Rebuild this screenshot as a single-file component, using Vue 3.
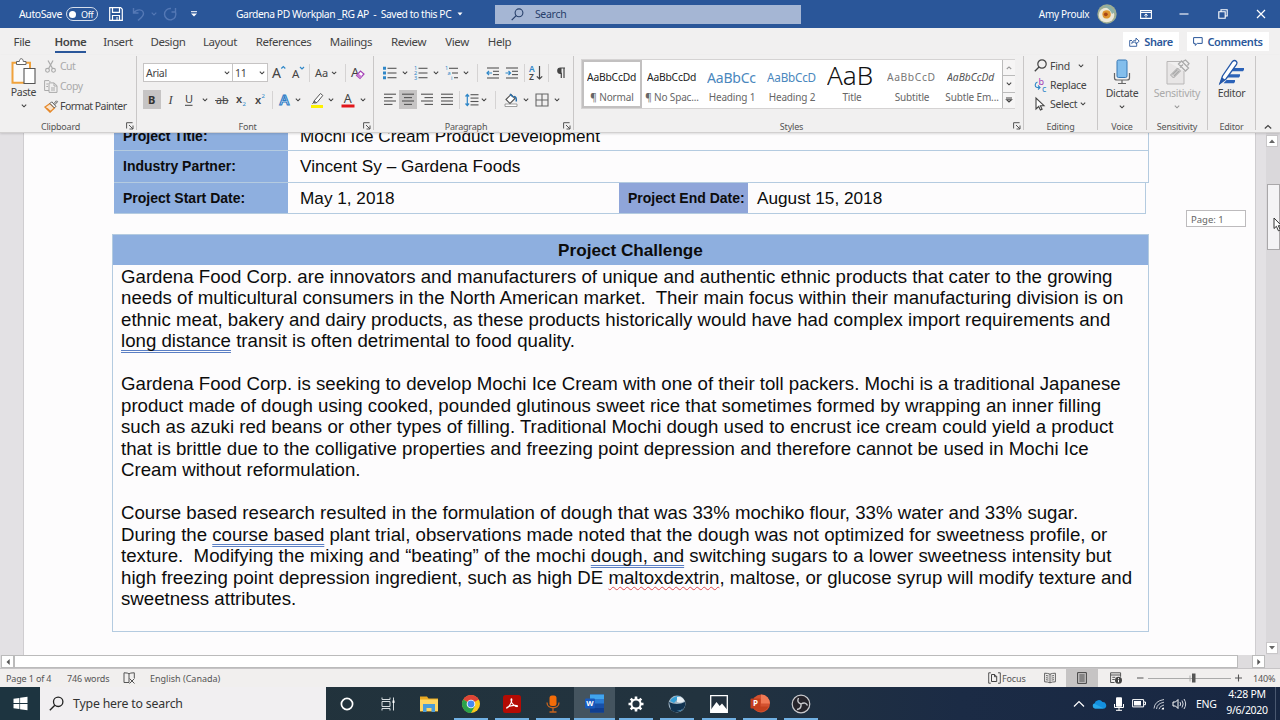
<template>
  <div class="screen">
    <header class="titlebar">
      <span class="autosave">AutoSave</span>
      <span class="toggle"><i></i>Off</span>
      <div class="quick">
        <span v-for="q in quick" :key="q.icon" class="cell" :style="{ width: q.w + 'px' }"><Icon :name="q.icon" /></span>
      </div>
      <div class="doc-title">Gardena PD Workplan _RG AP&nbsp; -&nbsp; Saved to this PC <Icon name="caret" /></div>
      <div class="search"><Icon name="lens" /><span>Search</span></div>
      <div class="user">Amy Proulx</div>
      <Icon name="avatar" />
      <div class="window-buttons">
        <span v-for="b in ['ribbonOpts', 'minimize', 'restore', 'close']" :key="b"><Icon :name="b" /></span>
      </div>
    </header>

    <nav class="tabs">
      <span v-for="t in tabs" :key="t.name" class="tab" :class="{ active: t.name === 'Home' }" :style="{ width: t.w + 'px' }"><b>{{ t.name }}</b></span>
      <div class="tab-actions">
        <span class="action share"><Icon name="share" />Share</span>
        <span class="action comments"><Icon name="comment" />Comments</span>
      </div>
    </nav>

    <section class="ribbon">
      <div class="group clipboard">
        <div class="group-body">
          <div class="big paste"><Icon name="paste" /><span>Paste</span><Icon name="chev" /></div>
          <div class="stack">
            <span class="off"><Icon name="cut" />Cut</span>
            <span class="off"><Icon name="copy" />Copy</span>
            <span><Icon name="painter" />Format Painter</span>
          </div>
        </div>
        <div class="group-label">Clipboard</div>
        <Icon name="launcher" class="launcher" />
      </div>

      <div class="group font">
        <div class="row">
          <span class="combo family">Arial<Icon name="chev" /></span>
          <span class="combo size">11<Icon name="chev" /></span>
          <span v-for="(c, i) in fontTop" :key="i" class="cell" :class="c.cls" :style="{ width: c.w + 'px' }"><Icon v-if="c.icon" :name="c.icon" /></span>
        </div>
        <div class="row second">
          <span v-for="(c, i) in fontBottom" :key="i" class="cell" :class="c.cls" :style="{ width: c.w + 'px' }"><Icon v-if="c.icon" :name="c.icon" /></span>
        </div>
        <div class="group-label">Font</div>
        <Icon name="launcher" class="launcher" />
      </div>

      <div class="group paragraph">
        <div class="row">
          <span v-for="(c, i) in paraTop" :key="i" class="cell" :class="c.cls" :style="{ width: c.w + 'px' }"><Icon v-if="c.icon" :name="c.icon" /></span>
        </div>
        <div class="row second">
          <span v-for="(c, i) in paraBottom" :key="i" class="cell" :class="c.cls" :style="{ width: c.w + 'px' }"><Icon v-if="c.icon" :name="c.icon" /></span>
        </div>
        <div class="group-label">Paragraph</div>
        <Icon name="launcher" class="launcher" />
      </div>

      <div class="group styles">
        <div class="gallery">
          <div v-for="s in styles" :key="s.name" class="style" :class="s.cls">
            <div class="sample"><span>{{ s.sample }}</span></div>
            <div class="style-name">{{ s.name }}</div>
          </div>
          <div class="gallery-scroll">
            <span class="faded"><Icon name="chevUp" /></span>
            <span><Icon name="chev" /></span>
            <span><Icon name="more" /></span>
          </div>
        </div>
        <div class="group-label">Styles</div>
        <Icon name="launcher" class="launcher" />
      </div>

      <div class="group editing">
        <div class="stack">
          <span><Icon name="find" /><em class="find">Find</em><Icon name="chev" /></span>
          <span><Icon name="replace" />Replace</span>
          <span><Icon name="select" /><em>Select</em><Icon name="chev" /></span>
        </div>
        <div class="group-label">Editing</div>
      </div>
      <div class="group voice">
        <div class="big"><Icon name="dictate" /><span>Dictate</span><Icon name="chev" /></div>
        <div class="group-label">Voice</div>
      </div>
      <div class="group sens">
        <div class="big off"><Icon name="sensitivity" /><span>Sensitivity</span><Icon name="chev" /></div>
        <div class="group-label">Sensitivity</div>
      </div>
      <div class="group editor">
        <div class="big"><Icon name="editor" /><span>Editor</span></div>
        <div class="group-label">Editor</div>
      </div>
      <div class="collapse"><Icon name="collapse" /></div>
    </section>

    <main class="workspace">
      <div class="canvas">
        <div class="paper">
          <div class="info">
            <div class="info-row first"><b>Project Title:</b><span>Mochi Ice Cream Product Development</span></div>
            <div class="info-row"><b>Industry Partner:</b><span>Vincent Sy – Gardena Foods</span></div>
            <div class="info-row dates">
              <b>Project Start Date:</b><span>May 1, 2018</span>
              <b class="end">Project End Date:</b><span class="end-value">August 15, 2018</span>
            </div>
          </div>
          <div class="challenge">
            <h2>Project Challenge</h2>
            <div class="body">
              <p v-for="(line, i) in lines" :key="i"><span v-for="(s, j) in line" :key="j" :class="s.cls">{{ s.t }}</span></p>
            </div>
          </div>
        </div>
        <div class="page-tip">Page: 1</div>
      </div>
      <div class="vscroll">
        <span class="arrow"><Icon name="triUp" /></span>
        <span class="thumb"></span>
        <span class="arrow bottom"><Icon name="triDown" /></span>
        <Icon name="pointer" class="pointer" />
      </div>
    </main>

    <div class="hscroll">
      <span class="harrow"><Icon name="triLeft" /></span>
      <span class="hthumb"></span>
      <span class="harrow right"><Icon name="triRight" /></span>
    </div>

    <footer class="status">
      <span class="pages">Page 1 of 4</span>
      <span class="words">746 words</span>
      <Icon name="proof" />
      <span class="lang">English (Canada)</span>
      <div class="views">
        <Icon name="focus" /><span class="focus">Focus</span>
        <span class="view"><Icon name="readMode" /></span>
        <span class="view on"><Icon name="printLayout" /></span>
        <span class="view web"><Icon name="webLayout" /></span>
        <Icon name="zoomBar" />
        <span class="zoom">140%</span>
      </div>
    </footer>

    <div class="taskbar">
      <span class="start"><Icon name="windows" /></span>
      <span class="task-search"><Icon name="lensDark" />Type here to search</span>
      <span v-for="a in apps" :key="a.icon" class="app" :class="{ running: a.run, current: a.icon === 'word' }"><Icon :name="a.icon" /></span>
      <div class="tray">
        <span v-for="t in tray" :key="t.icon" class="cell" :style="{ width: t.w + 'px' }"><Icon :name="t.icon" /></span>
        <span class="eng">ENG</span>
        <div class="clock"><span>4:28 PM</span><span>9/6/2020</span></div>
      </div>
    </div>
  </div>
</template>

<script setup>
import { h } from 'vue'

const font = 'font-family="Noto Sans, sans-serif"'
const bar = (x, y, w, c = '#555') => `<path d="M${x} ${y}h${w}" stroke="${c}" stroke-width="1.1"/>`

// name: [width, height, markup]
const glyphs = {
  save: [14, 14, '<path d="M.7.7h11l1.6 1.6v11H.7zM3.5.7v4.6h7V.7M3.5 13V8.5h7V13" fill="none" stroke="#fff" stroke-width="1.2"/><path d="M8 10v3" stroke="#fff"/>'],
  undo: [14, 14, '<path d="M1.500 1v5h5M1.800 5.800C5 1.500 11 2 11.500 6.500 11.700 9 9 11 6 13.500" fill="none" stroke="#5478b5" stroke-width="1.400"/>'],
  chevBlue: [6, 4, '<path d="M.7.7 3 3 5.300.7" fill="none" stroke="#5478b5" stroke-width="1.100"/>'],
  redo: [14, 14, '<path d="M11.500 1v4h-4M11.500 5A5.700 5.700 0 1 1 7 1.500" fill="none" stroke="#5478b5" stroke-width="1.400"/>'],
  customize: [8, 6, '<path d="M1 .7h6" stroke="#fff"/><path d="M1 2.500h6L4 5.500z" fill="#fff"/>'],
  caret: [6, 4, '<path d="M.5.5h5L3 3.500z" fill="#fff"/>'],
  lens: [13, 13, '<circle cx="8" cy="4.800" r="3.900" fill="none" stroke="#28406b" stroke-width="1.100"/><path d="m5.200 7.700-4.500 4.500" stroke="#28406b" stroke-width="1.200"/>'],
  avatar: [20, 20, '<circle cx="10" cy="10" r="9.700" fill="#9fae93"/><ellipse cx="9.500" cy="11" rx="7.800" ry="7.300" fill="#ece8d8"/><path d="M7 2q6-2 11 6l-3 2q-2-5-8-8z" fill="#8db1a8"/><path d="M6 7.500q4-2.500 7 0 2 4-1 6.500-4 1.500-6-1-1.500-3 0-5.500z" fill="#dd9430"/><circle cx="8.800" cy="10.300" r="1.900" fill="#a94516"/>'],
  ribbonOpts: [12, 9, '<path d="M.6.6h10.800v7.800H.6zM.6 2.500h10.800" fill="none" stroke="#fff" stroke-width="1.100"/><path d="M6 7.500V4M4.300 5.500 6 3.900l1.700 1.600" fill="none" stroke="#fff"/>'],
  minimize: [10, 2, '<path d="M.5 1h9" stroke="#fff" stroke-width="1.100"/>'],
  restore: [10, 10, '<path d="M.8 2.800h6.400v6.400H.8zM3 2.500V.8h6.200V7H7.500" fill="none" stroke="#fff" stroke-width="1.100"/>'],
  close: [10, 10, '<path d="m1 1 8 8M9 1 1 9" stroke="#fff" stroke-width="1.200"/>'],
  share: [11, 10, '<path d="M3 3.500H.7v5.800h7V6.500M2.700 6.500C3 4.500 4.500 3.300 7 3.200V1l3.200 3.200L7 7V5C5 5 3.600 5.400 2.700 6.500z" fill="none" stroke="#2b579a" stroke-width=".9"/>'],
  comment: [10, 9, '<path d="M.6.6h8.600v5.800H4.300L2.200 8.400v-2H.6z" fill="none" stroke="#2b579a"/>'],
  chev: [6, 4, '<path d="m.8.700 2.200 2.100L5.200.7" fill="none" stroke="#444" stroke-width="1.100"/>'],
  chevUp: [6, 4, '<path d="M.8 3 3 .9 5.200 3" fill="none" stroke="#999" stroke-width="1.100"/>'],
  more: [8, 6, '<path d="M1 1h6M1.500 2.700 4 5l2.500-2.300z" fill="none" stroke="#444" stroke-width="1.100"/>'],
  collapse: [8, 6, '<path d="m.8 4.500 3.200-3 3.200 3" fill="none" stroke="#444" stroke-width="1.200"/>'],
  launcher: [8, 8, '<path d="M.6 6.500V.7h6M3 3l4 4M7 3.500V7H3.500" fill="none" stroke="#555"/>'],
  paste: [26, 28, '<path d="M1.500 4.800h17.500v20H1.500z" fill="#fafafa" stroke="#f0a23c" stroke-width="2"/><path d="M5.500 6.500v-3h2.800C8.500 1.500 9.300.7 10.300.7s1.900.8 2 2.800H15v3z" fill="#fff" stroke="#666"/><path d="M13 10.500h11v15H13z" fill="#fff" stroke="#555" stroke-width="1.100"/>'],
  cut: [13, 13, '<path d="m3.500.5 4.700 8.300M8.500.5 4 8.800" stroke="#aaa" stroke-width="1.200"/><g fill="none" stroke="#aaa" stroke-width="1.100"><circle cx="3" cy="10.300" r="1.900"/><circle cx="9" cy="10.300" r="1.900"/></g>'],
  copy: [14, 13, '<path d="M5 10.500H.6V.6H5l1.500 1.500M5 2.900h5l3 2.800v6.700H5zM10 3v3h3M7 8h4M7 10h4M2.300 4H4M2.300 6.500H4" fill="none" stroke="#aaa"/>'],
  painter: [14, 13, '<path d="m1 7 5-3.500 4.500 4.500L6 12z" fill="#fbe3c9" stroke="#e68a2d" stroke-width="1.300"/><path d="M3 8.500 7 12" stroke="#e68a2d" stroke-width="1.500"/><path d="m6 3.500 1.700-1.700 4.200 4.500-1.500 1.600zM9.700 3.800 12.500.8l1 1-2.800 3" fill="#fff" stroke="#555"/>'],
  grow: [16, 17, `<text x="1" y="14" font-size="14" fill="#444" ${font}>A</text><path d="m10.300 4.500 2-2 2 2" fill="none" stroke="#2f87c8" stroke-width="1.200"/>`],
  shrink: [16, 17, `<text x="1" y="14" font-size="11.500" fill="#444" ${font}>A</text><path d="m9 3 2 2 2-2" fill="none" stroke="#2f87c8" stroke-width="1.200"/>`],
  changeCase: [22, 16, `<text x="0" y="12" font-size="11" fill="#444" ${font}>Aa</text><path d="m17 6.800 2.100 2 2.100-2" fill="none" stroke="#444" stroke-width="1.100"/>`],
  clearFormat: [15, 16, `<text x="0" y="12" font-size="13" fill="#444" ${font}>A</text><path d="m5.500 10.500 4-4.500 3.500 3-4 4.500z" fill="#fff" stroke="#a33fb5" stroke-width="1.200"/><path d="m7.500 8.500 3.500 3-2 2-3.500-3z" fill="#c77bd3"/>`],
  bold: [10, 14, `<text x="1" y="11" font-size="11" font-weight="700" fill="#333" ${font}>B</text>`],
  italic: [10, 14, '<text x="2.500" y="11" font-size="12.500" font-style="italic" fill="#444" font-family="Liberation Serif, serif">I</text>'],
  underline: [10, 15, `<text x="1" y="11" font-size="11" fill="#444" ${font}>U</text><path d="M1 13.300h7.500" stroke="#444"/>`],
  strike: [14, 14, `<text x="1" y="11" font-size="10.500" fill="#444" ${font}>ab</text><path d="M0 7.500h13.500" stroke="#444" stroke-width=".9"/>`],
  sub: [12, 16, `<text x="0" y="11" font-size="11" font-weight="600" fill="#444" ${font}>x</text><text x="6.500" y="14" font-size="6" fill="#2f87c8" ${font}>2</text>`],
  sup: [12, 16, `<text x="0" y="12" font-size="11" font-weight="600" fill="#444" ${font}>x</text><text x="6.500" y="6" font-size="6" fill="#2f87c8" ${font}>2</text>`],
  effects: [14, 16, `<text x="1.500" y="13" font-size="14.500" font-weight="600" fill="#fff" stroke="#2c7cc6" stroke-width="1.100" ${font}>A</text>`],
  highlight: [16, 16, '<path d="M2 13h12v3H2z" fill="#fdf100"/><path d="m5 9 6.500-7.500 2.300 2L8 10.500l-2.500.7zM3.500 12 5.500 9l2 2" fill="#fff" stroke="#555"/>'],
  fontColor: [14, 16, `<text x="2.800" y="11" font-size="12.500" fill="#444" ${font}>A</text><path d="M.5 12.500h13v3H.5z" fill="#e2161a"/>`],
  bullets: [14, 14, '<path d="M0 .8h3v3H0zM0 5.500h3v3H0zM0 10.200h3v3H0z" fill="#2f87c8"/>' + bar(4.5, 2.3, 9) + bar(4.5, 7, 9) + bar(4.5, 11.7, 9)],
  numbering: [14, 14, `<g font-size="5.500" fill="#2f87c8" ${font}><text x="0" y="4">1</text><text x="0" y="9">2</text><text x="0" y="14">3</text></g>` + bar(4.5, 2.3, 9) + bar(4.5, 7, 9) + bar(4.5, 11.7, 9)],
  multilevel: [14, 14, `<g font-size="5.500" fill="#2f87c8" ${font}><text x="0" y="4">1</text><text x="2.500" y="9">a</text><text x="6" y="14">i</text></g>` + bar(4, 2.3, 9) + bar(7, 7, 6) + bar(9, 11.7, 4)],
  outdent: [14, 12, bar(1, 1, 12) + bar(7, 4.3, 6) + bar(7, 7.6, 6) + bar(1, 11, 12) + '<path d="M1 6h5M3 4 1 6l2 2" fill="none" stroke="#2f87c8" stroke-width="1.200"/>'],
  indent: [14, 12, bar(1, 1, 12) + bar(7, 4.3, 6) + bar(7, 7.6, 6) + bar(1, 11, 12) + '<path d="M.5 6h5M3.500 4l2 2-2 2" fill="none" stroke="#2f87c8" stroke-width="1.200"/>'],
  sort: [15, 16, `<text x="0" y="7.300" font-size="8.500" font-weight="600" fill="#2f87c8" ${font}>A</text><text x="0" y="15" font-size="8.500" font-weight="600" fill="#444" ${font}>Z</text><path d="M10.500 1v13M7.800 11.300l2.700 2.700 2.700-2.700" fill="none" stroke="#444" stroke-width="1.200"/>`],
  pilcrow: [9, 12, '<path d="M8 1H3.500a2.700 2.700 0 0 0 0 5.400H4.300V11M7 1v10" fill="none" stroke="#444" stroke-width="1.200"/><path d="M4.500 1H3.500a2.700 2.700 0 0 0 0 5.400h1z" fill="#444"/>'],
  left: [12, 13, bar(0, 1.2, 12) + bar(0, 4.6, 8.5) + bar(0, 8, 12) + bar(0, 11.4, 8.5)],
  center: [12, 13, bar(0, 1.2, 12) + bar(2, 4.6, 8) + bar(0, 8, 12) + bar(2, 11.4, 8)],
  right: [12, 13, bar(0, 1.2, 12) + bar(3.5, 4.6, 8.5) + bar(0, 8, 12) + bar(3.5, 11.4, 8.5)],
  justify: [12, 13, bar(0, 1.2, 12) + bar(0, 4.6, 12) + bar(0, 8, 12) + bar(0, 11.4, 12)],
  spacing: [14, 14, bar(5.5, 1.7, 8) + bar(5.5, 5.1, 8) + bar(5.5, 8.5, 8) + bar(5.5, 11.9, 8) + '<path d="M2.300 1.500v11M.5 3.500l1.800-2 1.800 2M.5 10.500l1.800 2 1.800-2" fill="none" stroke="#2f87c8" stroke-width="1.200"/>'],
  shading: [14, 14, '<path d="M1 11h12v2.500H1z" fill="#fff" stroke="#888" stroke-width=".8"/><path d="m2 6.500 5-5 4 4-5 5z" fill="#fff" stroke="#555" stroke-width="1.100"/><path d="M6 1l3 3M10 3.500c2 0 2.500 2 2.300 5" fill="none" stroke="#2870ad" stroke-width="1.500"/>'],
  borders: [14, 14, '<path d="M1 1h12v12H1zM7 1v12M1 7h12" fill="none" stroke="#666" stroke-width="1.100"/>'],
  find: [13, 13, '<circle cx="8" cy="5" r="4.200" fill="none" stroke="#444" stroke-width="1.200"/><path d="M5 8 .8 12.200" stroke="#444" stroke-width="1.300"/>'],
  replace: [13, 14, `<g font-size="9" ${font}><text x="4.500" y="6.500" fill="#a33fb5">b</text><text x="8" y="13.500" fill="#2f87c8">c</text></g><path d="M3.500 4C.5 5 .5 9 3 9.500h2.500M4 7.500l2 2-2 2" fill="none" stroke="#2f87c8" stroke-width="1.100"/>`],
  select: [13, 14, '<path d="M2 1v11l2.700-2.500 1.700 3.500 1.700-.8-1.700-3.500H10z" fill="#fff" stroke="#444" stroke-width="1.100"/>'],
  dictate: [18, 26, '<rect x="4" y="1" width="10" height="17.500" rx="1.500" fill="#83beec" stroke="#3678b5"/><path d="M1.500 14v5q0 2 2.500 2h10q2.500 0 2.500-2v-5M9 21v3.500M5 24.500h8" fill="none" stroke="#666" stroke-width="1.200"/>'],
  sensitivity: [26, 26, '<path d="M3 2.500h13M3 2.500V25h17V12" fill="#e8e6e6" stroke="#b9b7b7"/><path d="m6.500 16 7-7 3 3-7 7z" fill="#d8d6d6" stroke="#aaa"/><path d="m8.500 15.500 5-5M10 17l5-5M14.500 5l3-3 7 7-3 3zM16 8.500l3-3M18 3l3.500-2 3.500 3.500-1.500 2" fill="none" stroke="#aaa" stroke-width="1.300"/>'],
  editor: [27, 26, '<path d="M15 9h11q.5 1.800-1 3.300H13zM11.500 15.200h10.500q.5 1.800-1 3.300H9.500zM8.500 21h8.500q.5 1.800-1 3.300H5.500z" fill="#2b62b8"/><path d="M2 24.500 4.500 17 14.500 2.500q2-2 4 0 1 1.200 0 3L8 20z" fill="#fff" stroke="#2457a8" stroke-width="1.300"/><path d="m1 25.500 3-7L7 20.500z" fill="#2457a8"/>'],
  triUp: [8, 6, '<path d="M1 5h6L4 1.500z" fill="#666"/>'],
  triDown: [8, 6, '<path d="M1 1h6L4 4.500z" fill="#666"/>'],
  triLeft: [6, 8, '<path d="M4.700 1v6L1.500 4z" fill="#555"/>'],
  triRight: [6, 8, '<path d="M1.300 1v6l3.200-3z" fill="#555"/>'],
  pointer: [10, 16, '<path d="M1 1v10.500l2.400-2.200 2 4.500 1.900-.9-2-4.200h3.200z" fill="#fff" stroke="#333"/>'],
  proof: [13, 12, '<path d="M6 10.500V1.800Q5 .8 1 .8v9.700zM6 1.800Q7 .8 11.300.8V6" fill="none" stroke="#555"/><path d="m6.500 6.500 5 5M11.500 6.500l-5 5" stroke="#555"/>'],
  focus: [13, 12, '<path d="M2.800.8H.7v10.400h2.100M10 .8h2.300v10.400H10" fill="none" stroke="#555"/><path d="M3.500 2.500h3.200l2 2v5H3.500zM6.500 2.500v2.200h2.200" fill="none" stroke="#444"/>'],
  readMode: [12, 12, '<path d="M6 10.800Q4 9.800.6 9.800V1.200Q4 1.200 6 2.200 8 1.200 11.400 1.200v8.600Q8 9.800 6 10.800zM6 2v9M2 3.500l2.500.5M2 5.700l2.500.4M2 7.700l2.500.4M10 3.500 7.500 4M10 5.700l-2.500.4M10 7.700l-2.500.4" fill="none" stroke="#555" stroke-width=".9"/>'],
  printLayout: [10, 12, '<path d="M.6.6h8.800v10.800H.6zM2.300 3h5.400M2.300 5h5.400M2.300 7h5.400M2.300 9h5.400" fill="none" stroke="#444"/>'],
  webLayout: [12, 12, '<path d="M4.500 10.500H.6V.8h10v4M.6 3h10M2.300 5.300h3M2.300 7.500h2.500" fill="none" stroke="#555"/><circle cx="8.500" cy="8.200" r="3.500" fill="#444"/><path d="M8.500 7.700v2.500M8.500 6v.9" stroke="#fff"/>'],
  zoomBar: [105, 12, '<path d="M0 6h6.500M98 6h7M101.500 2.500v7" stroke="#555" stroke-width="1.100"/><path d="M11 6.500h83" stroke="#aaa"/><path d="M53 3.500v6" stroke="#aaa"/><path d="M55 1.500h3.500v9h-3.500z" fill="#555"/>'],
  windows: [15, 15, '<path d="M.5 2.700 6.400 1.900v5.200H.5zM7.100 1.800 14.500.7v6.400H7.100zM.5 7.900h5.900v5.200l-5.900-.8zM7.100 7.900h7.400v6.400l-7.400-1z" fill="#fff"/>'],
  lensDark: [15, 15, '<circle cx="9.200" cy="5.800" r="4.700" fill="none" stroke="#222" stroke-width="1.300"/><path d="m5.800 9.200-5 5" stroke="#222" stroke-width="1.400"/>'],
  cortana: [14, 14, '<circle cx="7" cy="7" r="5.600" fill="none" stroke="#fff" stroke-width="1.700"/>'],
  taskview: [15, 14, '<path d="M1 .5v2h8v-2M1 13.500v-2h8v2M1 4.500h8v5H1z" fill="none" stroke="#d7dde0"/><path d="M12.500.5v13" stroke="#d7dde0"/><path d="M11.500 3.500h2v2.500h-2z" fill="#fff"/>'],
  explorer: [20, 18, '<path d="M1 1.500h7l1.500 2H19v13H1z" fill="#e9a922"/><path d="M1 4.500h18V16H1z" fill="#ffd662"/><path d="M4 9h12v8h-3.500v-4h-5v4H4z" fill="#4b9cd8"/>'],
  chrome: [20, 20, '<circle cx="10" cy="10" r="9" fill="#fbc91d"/><path d="M10 10 2.200 5.500A9 9 0 0 1 17.800 5.500z" fill="#df4437"/><path d="M10 10 2.200 5.500A9 9 0 0 0 10 19l4-7z" fill="#2ba24c"/><path d="M10 5.500h7.800" stroke="#df4437" stroke-width="1"/><circle cx="10" cy="10" r="4.300" fill="#fff"/><circle cx="10" cy="10" r="3.400" fill="#4688f1"/>'],
  acrobat: [18, 18, '<rect width="18" height="18" rx="2.500" fill="#b40b04"/><path d="M4 13c2-1 5.500-6.500 4.700-9C8 2.800 7.500 5.500 9 8c1.500 2.300 5 4.500 5.500 3.200.3-1.200-6-1.200-10 .8-1 .5-1 1.600-.5 1z" fill="none" stroke="#fff" stroke-width="1.100"/>'],
  voice: [14, 18, '<rect x="3.500" y=".5" width="7" height="10.500" rx="2.500" fill="#f46c08"/><path d="M1 7.500c0 7 12 7 12 0M7 13v4M3.500 17h7" fill="none" stroke="#c8641d" stroke-width="1.300"/>'],
  word: [20, 19, `<path d="M5 .5h14v18H5z" fill="#1850a8"/><path d="M5 .5h14V5H5z" fill="#41a5ee"/><path d="M5 5h14v4.500H5z" fill="#2b7cd3"/><path d="M5 14h14v4.500H5z" fill="#103f91"/><rect y="4.500" width="10" height="10" rx="1" fill="#185abd"/><text x="1.200" y="12.300" font-size="7.500" font-weight="700" fill="#fff" ${font}>W</text>`],
  gear: [18, 18, '<g stroke="#fff" stroke-width="2.600"><path d="M9 1.500v15M1.500 9h15M3.700 3.700l10.600 10.600M14.300 3.700 3.700 14.300"/></g><circle cx="9" cy="9" r="4.600" fill="#21323f" stroke="#fff" stroke-width="2"/>'],
  globe: [18, 18, '<circle cx="9" cy="9" r="8.500" fill="#9fb4c4"/><path d="M1 7Q9 11 17 7A8.500 8.500 0 0 1 3 15z" fill="#123350"/><path d="M2 6Q6 .5 12 1.500L6 8z" fill="#35a0d8"/><path d="M9 2q5-1 7.500 4Q13 9 9 7z" fill="#e8eef2"/><path d="M8 15.500q4 1 7-2-2 4-7 2z" fill="#62b4e4"/>'],
  photos: [18, 18, '<path d="M.7.7h16.600v16.600H.7z" fill="#22303d" stroke="#fff" stroke-width="1.300"/><path d="M1 14.500 6.500 7l3.200 4L12 8.500l5 6V17H1z" fill="#fff"/>'],
  powerpoint: [20, 19, `<circle cx="11" cy="9.500" r="9" fill="#d35230"/><path d="M11 .5a9 9 0 0 1 9 9h-9z" fill="#f07a55"/><path d="M2.500 12.500h16A9 9 0 0 1 2.500 12.500z" fill="#c2421f"/><rect x=".5" y="4.500" width="10" height="10" rx="1" fill="#c43e1c"/><text x="3" y="12.300" font-size="8" font-weight="700" fill="#fff" ${font}>P</text>`],
  obs: [20, 20, '<circle cx="10" cy="10" r="8.800" fill="#25232a" stroke="#c9c9cd" stroke-width="1.200"/><path d="M10 10c-3-1-4-3-2.500-6M10 10c3-2 5.500-1 6.500 1.500M10 10c.5 3-1 5-4 5.500" fill="none" stroke="#c9c9cd" stroke-width="1.400"/>'],
  trayUp: [12, 8, '<path d="m1 6.500 5-5 5 5" fill="none" stroke="#fff" stroke-width="1.200"/>'],
  onedrive: [15, 10, '<path d="M3 9.500A2.700 2.700 0 0 1 2.500 4.500 4.500 4.500 0 0 1 10.500 3 3.500 3.500 0 0 1 12.500 9.500z" fill="#1490df"/><path d="M3 9.500A2.700 2.700 0 0 1 2 4.500L12 9.500z" fill="#28a8ea"/>'],
  trayMic: [12, 14, '<rect x="3" y=".3" width="6" height="9.500" rx="1" fill="#fff"/><path d="M1.500 7v3.500h9V7M6 10.500v3M3 13.300h6" fill="none" stroke="#fff"/>'],
  battery: [14, 9, '<path d="M.6.600h11v7.300H.6zM12 3h1.500v2.700H12" fill="none" stroke="#fff"/><path d="M2 2h7v4.500H2z" fill="#fff"/>'],
  wifi: [13, 12, '<g fill="none" stroke="#c5cad3"><path d="M1 10.500Q1.500 3 11 1.500M3.500 11Q4 5.500 11 4.200M6 11.200Q6.500 8 11 7"/></g><path d="M8.500 11.500q.3-1.800 2.500-2v2z" fill="#fff"/>'],
  speaker: [15, 12, '<path d="M1 4h2.500L6 1.500v9L3.500 8H1z" fill="none" stroke="#fff"/><path d="M8 4q1.300 2 0 4M10 2.500q2.300 3.500 0 7M12 1q3.300 5 0 10" fill="none" stroke="#d8dbe2"/>']
}

const Icon = ({ name }) => {
  const [w, ht, markup] = glyphs[name]
  return h('svg', { class: 'icon', width: w, height: ht, viewBox: `0 0 ${w} ${ht}`, innerHTML: markup })
}
Icon.props = ['name']

const c = (icon, w, cls) => ({ icon, w, cls })
const sep = (w) => ({ w, cls: 'sep' })
const gap = (w) => ({ w })

const quick = [c('save', 22), c('undo', 24), c('chevBlue', 7), c('redo', 27), c('customize', 19)]

const tabs = [
  { name: 'File', w: 44 }, { name: 'Home', w: 53 }, { name: 'Insert', w: 42 }, { name: 'Design', w: 58 }, { name: 'Layout', w: 46 },
  { name: 'References', w: 81 }, { name: 'Mailings', w: 54 }, { name: 'Review', w: 61 }, { name: 'View', w: 36 }, { name: 'Help', w: 49 }
]

const fontTop = [c('grow', 22), c('shrink', 17), sep(4), c('changeCase', 30), sep(8), c('clearFormat', 18)]
const fontBottom = [
  c('bold', 18, 'on'), c('italic', 19), c('underline', 18), c('chev', 13), c('strike', 21), c('sub', 20), c('sup', 18), sep(4),
  c('effects', 21), c('chev', 6), gap(5), c('highlight', 22), c('chev', 6), gap(3), c('fontColor', 22), c('chev', 7)
]
const paraTop = [
  c('bullets', 14), gap(5), c('chev', 6), gap(6), c('numbering', 14), gap(5), c('chev', 6), gap(6), c('multilevel', 14), gap(4), c('chev', 6),
  sep(17), c('outdent', 14), gap(5), c('indent', 14), sep(10), c('sort', 15), sep(9), c('pilcrow', 16)
]
const paraBottom = [
  c('left', 14), gap(2), c('center', 18, 'on'), c('right', 20), c('justify', 19), sep(6), c('spacing', 19), c('chev', 6), sep(17),
  c('shading', 14), gap(5), c('chev', 6), gap(6), c('borders', 14), gap(5), c('chev', 6)
]

const styles = [
  { name: '¶ Normal', sample: 'AaBbCcDd', cls: 'normal selected' },
  { name: '¶ No Spac...', sample: 'AaBbCcDd', cls: 'normal' },
  { name: 'Heading 1', sample: 'AaBbCc', cls: 'h1' },
  { name: 'Heading 2', sample: 'AaBbCcD', cls: 'h2' },
  { name: 'Title', sample: 'AaB', cls: 'title' },
  { name: 'Subtitle', sample: 'AaBbCcD', cls: 'subtitle' },
  { name: 'Subtle Em...', sample: 'AaBbCcDd', cls: 'subtle' }
]

const line = (...parts) => parts.map((p) => (typeof p === 'string' ? { t: p } : p))
const grammar = (t) => ({ t, cls: 'grammar' })
const spelling = (t) => ({ t, cls: 'spelling' })

const lines = [
  line('Gardena Food Corp. are innovators and manufacturers of unique and authentic ethnic products that cater to the growing'),
  line('needs of multicultural consumers in the North American market.  Their main focus within their manufacturing division is on'),
  line('ethnic meat, bakery and dairy products, as these products historically would have had complex import requirements and'),
  line(grammar('long distance'), ' transit is often detrimental to food quality.'),
  line(' '),
  line('Gardena Food Corp. is seeking to develop Mochi Ice Cream with one of their toll packers. Mochi is a traditional Japanese'),
  line('product made of dough using cooked, pounded glutinous sweet rice that sometimes formed by wrapping an inner filling'),
  line('such as azuki red beans or other types of filling. Traditional Mochi dough used to encrust ice cream could yield a product'),
  line('that is brittle due to the colligative properties and freezing point depression and therefore cannot be used in Mochi Ice'),
  line('Cream without reformulation.'),
  line(' '),
  line('Course based research resulted in the formulation of dough that was 33% mochiko flour, 33% water and 33% sugar.'),
  line('During the ', grammar('course based'), ' plant trial, observations made noted that the dough was not optimized for sweetness profile, or'),
  line('texture.  Modifying the mixing and “beating” of the mochi ', grammar('dough, and'), ' switching sugars to a lower sweetness intensity but'),
  line('high freezing point depression ingredient, such as high DE ', spelling('maltoxdextrin'), ', maltose, or glucose syrup will modify texture and'),
  line('sweetness attributes.')
]

const apps = [
  { icon: 'cortana' }, { icon: 'taskview' }, { icon: 'explorer' }, { icon: 'chrome', run: true }, { icon: 'acrobat', run: true },
  { icon: 'voice', run: true }, { icon: 'word', run: true }, { icon: 'gear', run: true }, { icon: 'globe', run: true },
  { icon: 'photos', run: true }, { icon: 'powerpoint', run: true }, { icon: 'obs', run: true }
]
const tray = [c('trayUp', 20), c('onedrive', 20), c('trayMic', 19), c('battery', 22), c('wifi', 19), c('speaker', 21)]
</script>

<style>
html,
body {
  margin: 0;
  overflow: hidden;
}
</style>

<style scoped>
.screen {
  width: 1280px;
  height: 720px;
  display: flex;
  flex-direction: column;
  overflow: hidden;
  background: #f1f0f0;
  color: #444;
  font-family: "Noto Sans", "Open Sans", sans-serif;
  font-size: 10.500px;
  letter-spacing: -0.300px;
  white-space: nowrap;
}
.icon {
  display: block;
  flex: none;
  overflow: visible;
  letter-spacing: 0;
}
.cell {
  display: flex;
  align-items: center;
  justify-content: center;
  flex: none;
}

/* title bar */
.titlebar {
  height: 28px;
  flex: none;
  display: flex;
  align-items: center;
  background: #2a5699;
  color: #fff;
}
.autosave {
  width: 47px;
  padding-left: 19px;
  letter-spacing: -0.400px;
}
.toggle {
  width: 30px;
  height: 12px;
  border: 1px solid #d5deec;
  border-radius: 7px;
  display: flex;
  align-items: center;
  gap: 5px;
  font-size: 9px;
}
.toggle i {
  width: 7px;
  height: 7px;
  margin-left: 2px;
  border-radius: 50%;
  background: #fff;
}
.quick {
  display: flex;
  align-items: center;
  padding-left: 7px;
  width: 131px;
}
.doc-title {
  width: 259px;
  display: flex;
  align-items: center;
  gap: 6px;
  font-size: 10.300px;
  letter-spacing: -0.420px;
  padding-bottom: 1px;
}
.search {
  width: 290px;
  height: 19px;
  padding-left: 16px;
  display: flex;
  align-items: center;
  gap: 11px;
  background: #a5b6d4;
  color: #28406b;
}
.user {
  width: 58px;
  padding-left: 238px;
  padding-bottom: 1px;
  font-size: 10px;
}
.window-buttons {
  display: flex;
  margin-left: 10px;
}
.window-buttons span {
  width: 38.300px;
  display: flex;
  align-items: center;
  justify-content: center;
}

/* tabs */
.tabs {
  height: 27px;
  flex: none;
  display: flex;
  align-items: stretch;
  font-size: 11.500px;
  letter-spacing: -0.400px;
}
.tab {
  flex: none;
  display: flex;
  justify-content: center;
  align-items: center;
}
.tab b {
  font-weight: 400;
  line-height: 19px;
  padding-top: 2px;
  border-bottom: 2px solid transparent;
}
.tab.active b {
  font-weight: 600;
  border-color: #2b579a;
  letter-spacing: -0.450px;
}
.tab-actions {
  margin-left: auto;
  padding: 4px 11px 4px 0;
  display: flex;
  gap: 8px;
}
.action {
  display: flex;
  align-items: center;
  justify-content: center;
  gap: 4px;
  background: #fff;
  color: #2b579a;
  font-weight: 600;
  font-size: 11px;
}
.share {
  width: 56px;
}
.comments {
  width: 82px;
}

/* ribbon */
.ribbon {
  height: 77px;
  flex: none;
  display: flex;
  position: relative;
  z-index: 2;
  background: #f1f0f0;
  border-bottom: 1px solid #d2d0d0;
  box-shadow: 0 1px 2px #0002;
}
.group {
  flex: none;
  box-sizing: border-box;
  height: 74px;
  margin-top: 1px;
  border-right: 1px solid #c9c7c7;
  position: relative;
  display: flex;
  flex-direction: column;
}
.group-label {
  margin-top: auto;
  margin-bottom: -3px;
  text-align: center;
  font-size: 9px;
  line-height: 13px;
  color: #555;
  letter-spacing: -0.200px;
}
.launcher {
  position: absolute;
  right: 2px;
  bottom: 0;
}
.clipboard { width: 137px; }
.font { width: 237px; padding-left: 6px; }
.paragraph { width: 200px; padding-left: 9px; }
.styles { width: 450px; padding-left: 7px; }
.editing { width: 74px; }
.voice { width: 49px; }
.sens { width: 61px; }
.editor { width: 48px; }
.clipboard .group-label { padding-right: 15px; }
.font .group-label,
.styles .group-label { padding-right: 21px; }
.paragraph .group-label { padding-right: 24px; }
.group-body {
  display: flex;
}
.big {
  display: flex;
  flex-direction: column;
  align-items: center;
  padding-top: 3px;
}
.big span {
  line-height: 17px;
  margin-bottom: 3px;
}
.paste {
  width: 47px;
  padding-top: 2px;
}
.paste span {
  margin-top: -2px;
}
.off {
  color: #aaa;
}
.off .icon:last-child {
  opacity: 0.5;
}
.stack {
  display: flex;
  flex-direction: column;
}
.stack > span {
  height: 20px;
  display: flex;
  align-items: center;
  gap: 2px;
}
.clipboard .stack {
  margin-left: -3px;
  letter-spacing: -0.520px;
}
.clipboard .stack .icon {
  width: 14px;
  opacity: 1;
}
.editing .stack {
  padding-left: 10px;
}
.editing .stack > span {
  height: 19.300px;
  gap: 3px;
}
.editing em {
  font-style: normal;
}
.editing em.find {
  margin-right: 5px;
}
.row {
  display: flex;
  height: 19px;
  padding-top: 7px;
}
.second {
  padding-top: 8px;
}
.combo {
  box-sizing: border-box;
  height: 19px;
  border: 1px solid #c6c4c4;
  background: #fff;
  display: flex;
  align-items: center;
  justify-content: space-between;
  padding: 0 2px;
}
.family {
  width: 90px;
}
.size {
  width: 36px;
  margin-left: -1px;
}
.on {
  background: #c6c4c4;
}
.cell.sep {
  background: linear-gradient(#d5d3d3, #d5d3d3) center / 1px 18px no-repeat;
}

/* style gallery */
.gallery {
  display: flex;
  margin-top: 3px;
  height: 50px;
  width: 434px;
  box-sizing: border-box;
  border: 1px solid #d5d3d3;
  background: #fff;
}
.style {
  width: 60px;
  flex: none;
  box-sizing: border-box;
  display: flex;
  flex-direction: column;
  align-items: center;
}
.selected {
  box-shadow: inset 0 0 0 2px #c2c0c0;
}
.sample {
  width: 50px;
  height: 24px;
  margin-top: 5px;
  overflow: hidden;
  display: flex;
  align-items: center;
  color: #222;
  font-size: 10.300px;
  letter-spacing: -0.200px;
}
.style-name {
  font-size: 10px;
  line-height: 15px;
  margin-top: 1px;
  color: #666;
  letter-spacing: -0.150px;
}
.h1 .sample { color: #4a87bd; font-size: 14px; }
.h2 .sample { color: #4a87bd; font-size: 11.700px; }
.title .sample { font-size: 26px; font-weight: 300; color: #111; }
.title .sample span { margin-top: -5px; letter-spacing: 0; }
.subtitle .sample { color: #777; letter-spacing: 0.600px; }
.subtle .sample { font-style: italic; color: #555; letter-spacing: 0; }
.gallery-scroll {
  width: 12px;
  flex: none;
  margin-left: auto;
  display: flex;
  flex-direction: column;
  background: #f6f5f5;
  border-left: 1px solid #bbb;
}
.gallery-scroll span {
  flex: 1;
  display: flex;
  align-items: center;
  justify-content: center;
  border-bottom: 1px solid #bbb;
}
.gallery-scroll span:last-child {
  border-bottom: 0;
}
.collapse {
  flex: 1;
  display: flex;
  align-items: flex-end;
  padding: 0 0 2px 8px;
}

/* document */
.workspace {
  height: 522px;
  flex: none;
  display: flex;
  background: #e3e1e4;
}
.canvas {
  width: 1231px;
  margin-left: 23px;
  border-left: 1px solid #cfcdd0;
  border-right: 1px solid #cfcdd0;
  background: #fdfcfd;
  overflow: hidden;
  position: relative;
  color: #0c0c0c;
  font-family: "Liberation Sans", Arial, sans-serif;
  font-size: 18.670px;
  letter-spacing: 0;
}
.info {
  width: 1035px;
  margin-left: 90px;
  font-size: 17.200px;
}
.info-row {
  display: flex;
  box-sizing: border-box;
  width: 1035px;
  height: 32px;
  border: solid #b4cbe0;
  border-width: 0 1px 1px 0;
  line-height: 31px;
}
.info-row.first {
  height: 18px;
  line-height: 6px;
}
.info-row b {
  width: 174px;
  flex: none;
  box-sizing: border-box;
  padding-left: 9px;
  background: #8eafdf;
  font-size: 14px;
}
.info-row span {
  padding-left: 12px;
}
.info-row.dates {
  width: 1032px;
  height: 31px;
}
.dates span {
  width: 319px;
}
.info-row b.end {
  width: 129px;
  background: #8fa5d9;
}
.info-row .end-value {
  width: auto;
  padding-left: 9px;
}
.challenge {
  margin: 20px 0 0 88px;
  width: 1035px;
  height: 396px;
  border: 1px solid #b4cbe0;
}
.challenge h2 {
  margin: 0;
  height: 30px;
  line-height: 31px;
  text-align: center;
  background: #8eafdf;
  font-size: 17.150px;
}
.body {
  padding: 1px 0 0 8px;
}
.body p {
  margin: 0;
  height: 21.470px;
  line-height: 21.470px;
  white-space: pre;
}
.grammar {
  text-decoration: underline double #5b7fc4 1px;
  text-underline-offset: 3px;
  text-decoration-skip-ink: none;
}
.spelling {
  text-decoration: underline wavy #e04a50 1px;
  text-underline-offset: 2px;
  text-decoration-skip-ink: none;
}
.page-tip {
  position: absolute;
  left: 1162px;
  top: 77px;
  width: 54px;
  height: 15px;
  padding-left: 4px;
  border: 1px solid #bdbbbd;
  background: #fff;
  color: #666;
  font-family: "Noto Sans", sans-serif;
  font-size: 9.500px;
  line-height: 18px;
}
.vscroll {
  width: 14px;
  margin-left: 10px;
  display: flex;
  flex-direction: column;
  position: relative;
  background: #dad8db;
}
.arrow {
  height: 12px;
  width: 12px;
  margin: 2px 0 0 0;
  background: #fff;
  border: 1px solid #c9c7c9;
  box-sizing: border-box;
  display: flex;
  align-items: center;
  justify-content: center;
}
.arrow.bottom {
  margin: auto 0 1px;
}
.thumb {
  margin: 37px 0 0 1px;
  width: 11px;
  height: 64px;
  border: 1px solid #a9a7a9;
  background: #f4f3f5;
}
.pointer {
  position: absolute;
  left: 7px;
  top: 84px;
}
.hscroll {
  height: 13px;
  flex: none;
  display: flex;
  background: #dedcde;
  border-bottom: 1px solid #c6c4c6;
}
.harrow {
  width: 13px;
  margin-left: 1px;
  background: #fff;
  border: 1px solid #bbb;
  box-sizing: border-box;
  display: flex;
  align-items: center;
  justify-content: center;
}
.harrow.right {
  margin-left: 14px;
}
.hthumb {
  width: 1224px;
  box-sizing: border-box;
  border: 1px solid #bbb;
  background: #fff;
}

/* status bar */
.status {
  height: 18px;
  flex: none;
  display: flex;
  align-items: center;
  background: #f1efee;
  font-size: 9px;
  letter-spacing: -0.150px;
  color: #555;
}
.pages {
  width: 61px;
  padding-left: 6px;
}
.words {
  width: 56px;
}
.lang {
  padding-left: 14px;
  letter-spacing: 0;
}
.views {
  margin-left: auto;
  display: flex;
  align-items: center;
  height: 18px;
}
.focus {
  width: 32px;
  padding-left: 1px;
}
.view {
  width: 32px;
  height: 18px;
  display: flex;
  align-items: center;
  justify-content: center;
}
.view.web {
  width: 36px;
  margin-right: 3px;
}
.zoom {
  width: 27px;
  padding-left: 11px;
}

/* taskbar */
.taskbar {
  flex: 1;
  display: flex;
  background: linear-gradient(90deg, #21323a, #22333f 55%, #1b2b45 75%, #182742);
}
.start {
  width: 40px;
  display: flex;
  align-items: center;
  justify-content: center;
  background: #1d3440;
}
.task-search {
  width: 277px;
  padding-left: 9px;
  background: #f1eff1;
  display: flex;
  align-items: center;
  gap: 9px;
  font-size: 12.300px;
  letter-spacing: -0.180px;
  color: #333;
}
.app {
  width: 41.350px;
  box-sizing: border-box;
  display: flex;
  align-items: center;
  justify-content: center;
}
.running {
  background: linear-gradient(#71b1e4, #71b1e4) center bottom / 34px 2px no-repeat;
}
.current {
  background: linear-gradient(#71b1e4, #71b1e4) center bottom / 41px 2px no-repeat, #44545f;
}
.tray {
  margin-left: auto;
  display: flex;
  align-items: center;
  color: #fff;
}
.eng {
  width: 23px;
  padding-left: 6px;
}
.clock {
  width: 57px;
  height: 33px;
  border-right: 1px solid #4a5870;
  margin-right: 4px;
  display: flex;
  flex-direction: column;
  align-items: center;
  line-height: 15.500px;
  box-sizing: border-box;
}
</style>
